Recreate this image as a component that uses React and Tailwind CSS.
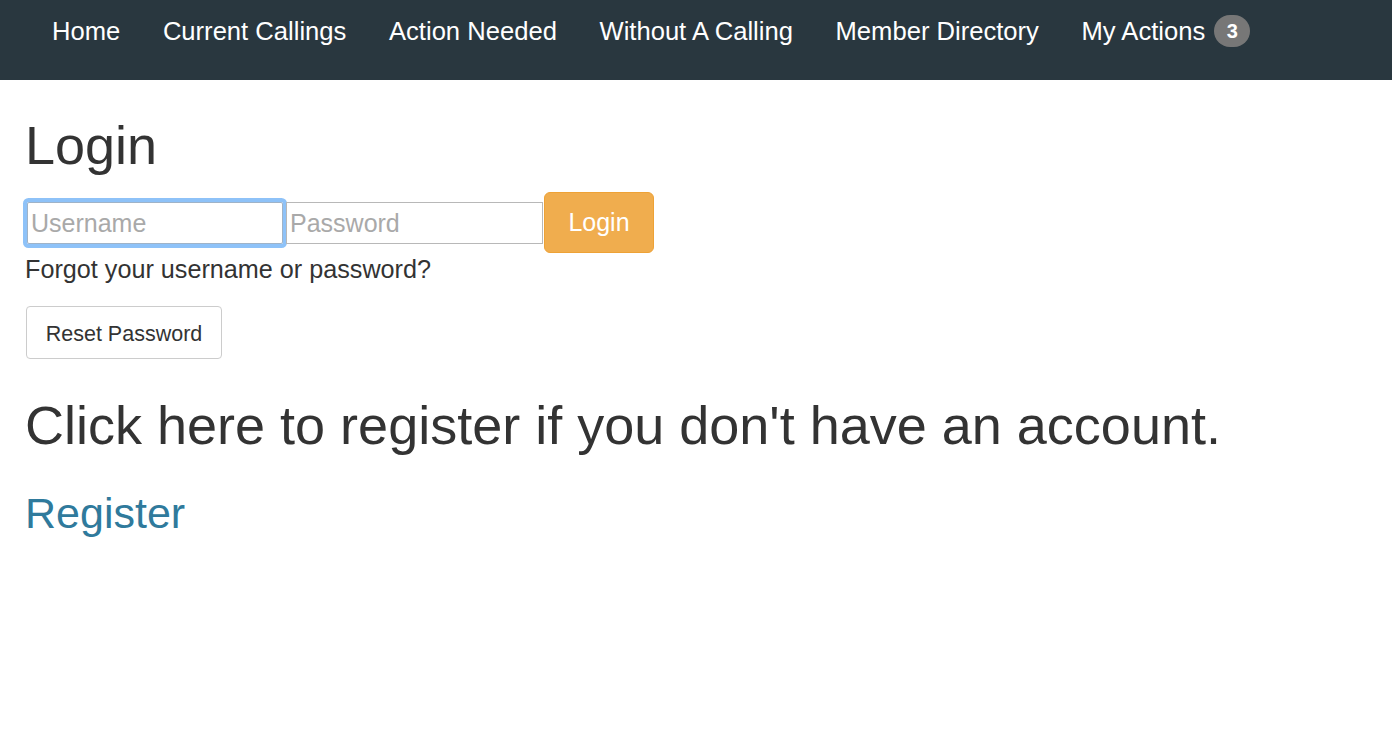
import React from "react";

const navItems = ["Home", "Current Callings", "Action Needed", "Without A Calling", "Member Directory"];

export default function App() {
  return (
    <div className="min-h-[748px] bg-white font-['Liberation_Sans',Arial,sans-serif] text-[#333333]">
      <nav className="h-[80px] bg-[#29373f] pl-[52px] flex items-start gap-[42.6px] pt-[13px]">
        {navItems.map((n) => (
          <a key={n} className="text-white text-[25.6px] leading-[36px] whitespace-nowrap">{n}</a>
        ))}
        <a className="text-white text-[25.6px] leading-[36px] whitespace-nowrap flex items-center">
          My Actions
          <span className="ml-[9px] inline-flex items-center justify-center w-[36px] h-[32px] rounded-full bg-[#777777] text-white text-[20px] font-bold leading-none">3</span>
        </a>
      </nav>
      <main className="px-[25px]">
        <h1 className="text-[54px] leading-[61px] mt-[35px] font-normal">Login</h1>
        <div className="mt-[16px] flex items-center h-[61px]">
          <input
            placeholder="Username"
            className="ml-[2px] w-[256px] h-[42px] pt-[2px] border border-[#9fb3c8] rounded-[2px] px-[3px] text-[25px] placeholder:text-[#a9a9a9] shadow-[0_0_0_4px_#8ec2f8] outline-none"
          />
          <input
            placeholder="Password"
            className="ml-[3px] w-[257px] h-[42px] pt-[2px] border border-[#b8b8b8] px-[3px] text-[25px] placeholder:text-[#a9a9a9] outline-none"
          />
          <button className="ml-[1px] w-[110px] h-[61px] bg-[#f0ad4e] border border-[#eea236] rounded-[6px] text-white text-[25px]">
            Login
          </button>
        </div>
        <p className="text-[25.2px] leading-[32px]">Forgot your username or password?</p>
        <button className="mt-[21px] ml-[1px] w-[196px] h-[53px] pt-[4px] border border-[#cccccc] rounded-[4px] bg-white text-[21.5px] text-[#333333]">
          Reset Password
        </button>
        <h2 className="mt-[36px] text-[54px] leading-[60px] font-normal whitespace-nowrap">
          Click here to register if you don't have an account.
        </h2>
        <a className="block mt-[34px] text-[43px] leading-[48px] text-[#2f7a9c] w-fit">Register</a>
      </main>
    </div>
  );
}
